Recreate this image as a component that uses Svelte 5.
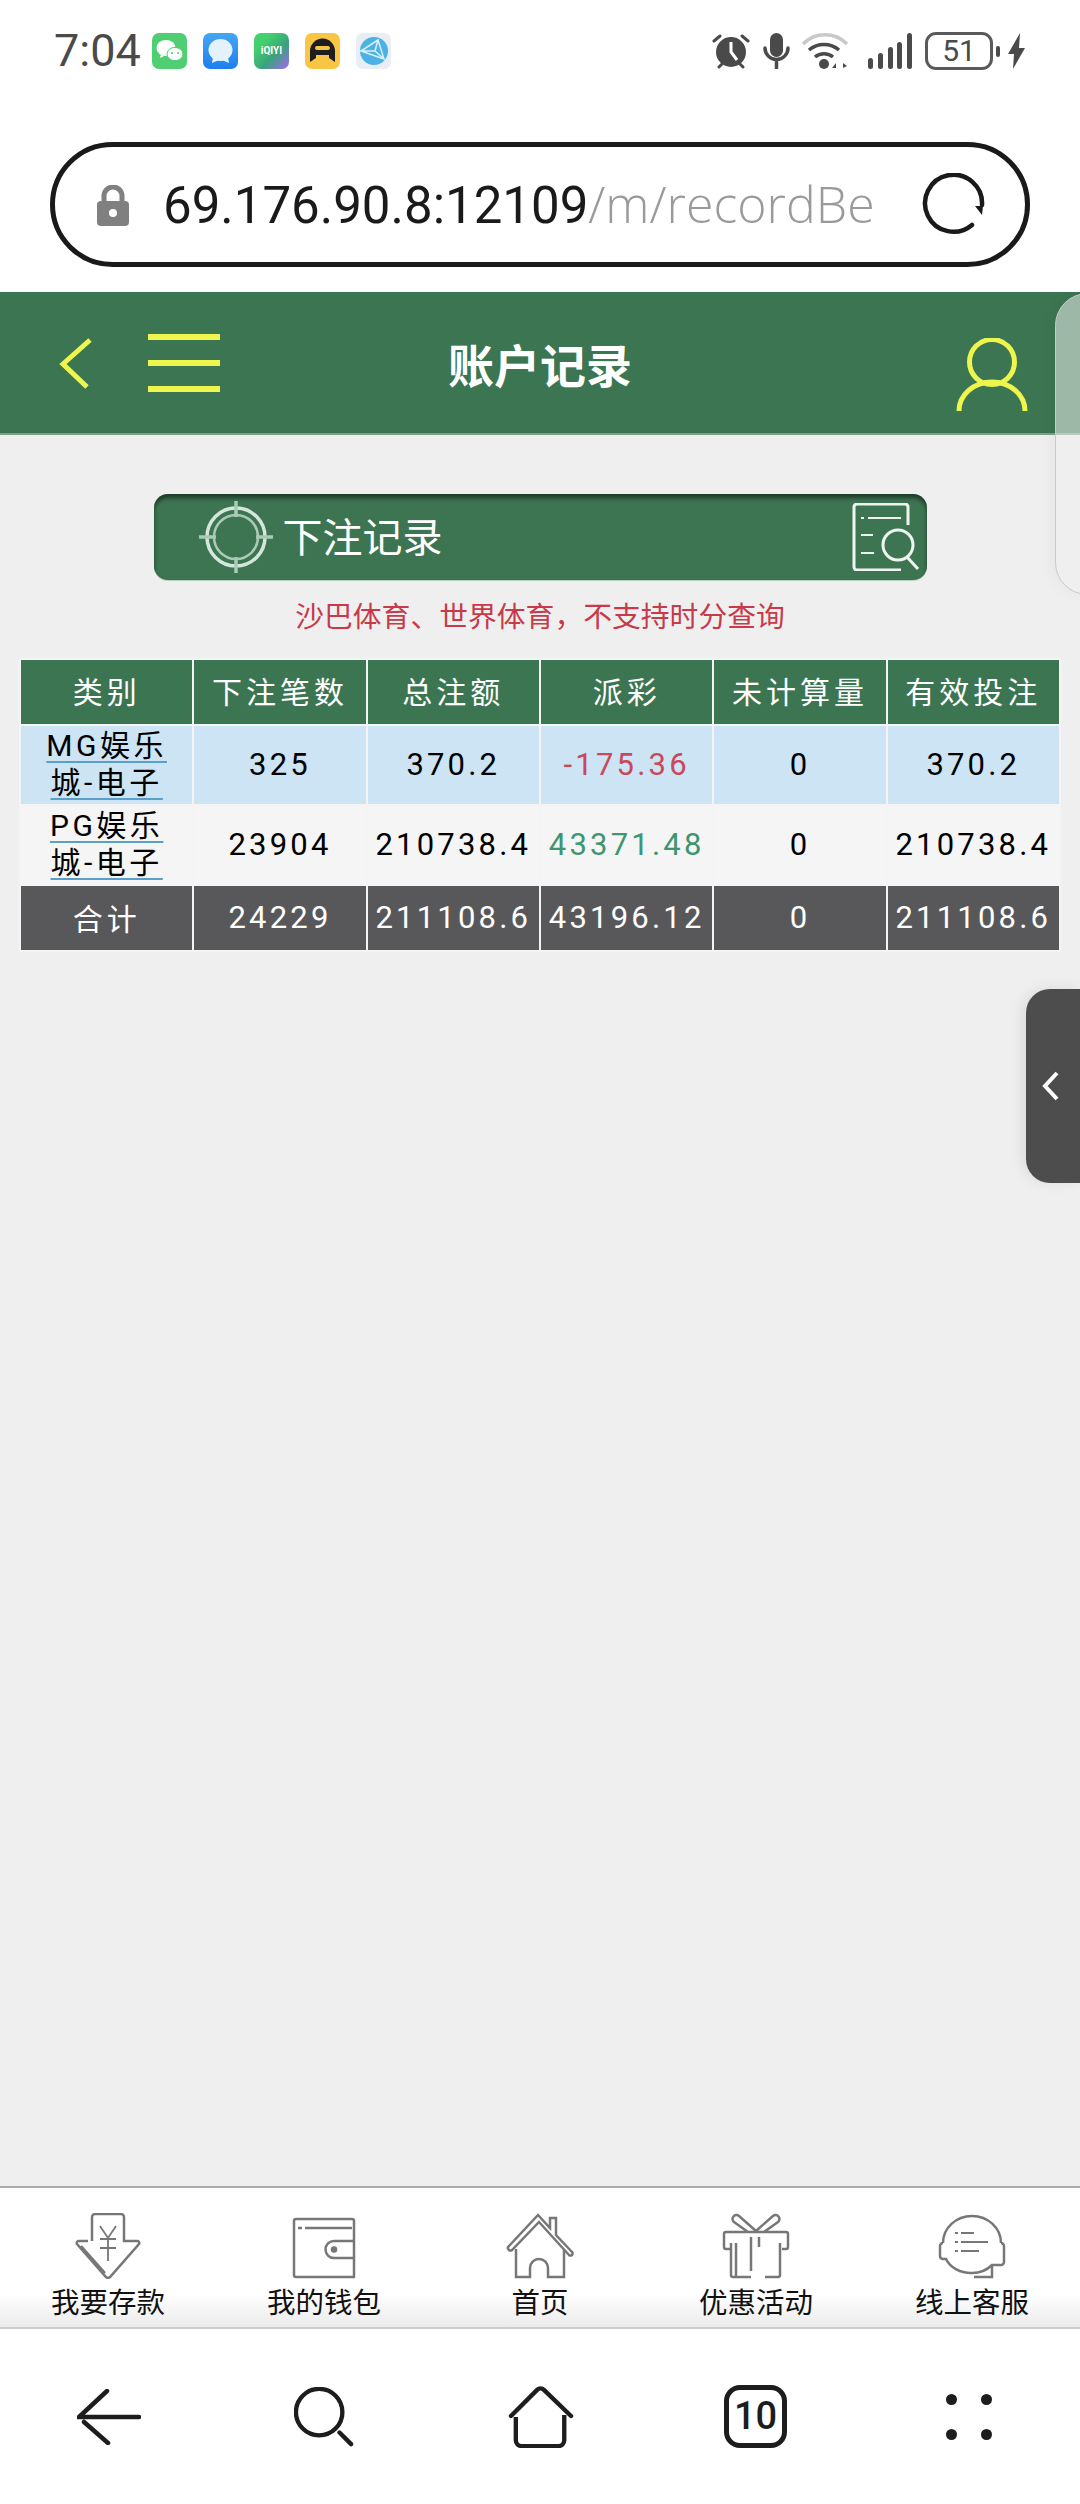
<script lang="ts">
  const columns = ["类别", "下注笔数", "总注额", "派彩", "未计算量", "有效投注"];

  const rows = [
    { name: ["MG娱乐", "城-电子"], count: "325", total: "370.2", payout: "-175.36", tone: "loss", pending: "0", valid: "370.2" },
    { name: ["PG娱乐", "城-电子"], count: "23904", total: "210738.4", payout: "43371.48", tone: "win", pending: "0", valid: "210738.4" }
  ];

  const summary = ["合计", "24229", "211108.6", "43196.12", "0", "211108.6"];

  const tabs = ["我要存款", "我的钱包", "首页", "优惠活动", "线上客服"];
</script>

<div class="phone">
  <div class="status">
    <span class="time">7:04</span>
    <div class="apps">
      <svg class="app" viewBox="0 0 35 36">
        <rect width="35" height="36" rx="7" fill="#4fcf72" />
        <ellipse cx="14" cy="15" rx="9.5" ry="8" fill="#fff" />
        <path d="M9 21l-1 4 5-2.5z" fill="#fff" />
        <ellipse cx="23" cy="21" rx="8" ry="6.6" fill="#fff" stroke="#4fcf72" />
        <circle cx="20" cy="20" r="1" fill="#4fcf72" />
        <circle cx="26" cy="20" r="1" fill="#4fcf72" />
      </svg>
      <svg class="app" viewBox="0 0 35 36">
        <defs>
          <linearGradient id="msg" x1="0" y1="0" x2="0" y2="1">
            <stop offset="0" stop-color="#45a6f5" />
            <stop offset="1" stop-color="#1f7fee" />
          </linearGradient>
        </defs>
        <rect width="35" height="36" rx="7" fill="url(#msg)" />
        <ellipse cx="17.5" cy="17" rx="12" ry="11" fill="#e4f2fd" />
        <path d="M10 24l-1 6 7-3z" fill="#e4f2fd" />
        <path d="M25 24l1 6-7-3z" fill="#e4f2fd" />
      </svg>
      <div class="app iqiyi">iQIYI</div>
      <svg class="app" viewBox="0 0 35 36">
        <rect width="35" height="36" rx="7" fill="#f8c544" />
        <path d="M5 29v-11a12.500 12.500 0 0 1 25 0v11l-6-4v-3h-13v3z" fill="#1e1e1e" />
        <rect x="10" y="13" width="15" height="4" rx="2" fill="#f8c544" />
      </svg>
      <svg class="app" viewBox="0 0 35 36">
        <rect width="35" height="36" rx="7" fill="#e9eef5" />
        <circle cx="18" cy="18" r="14" fill="#4cb1e4" />
        <path d="M5 18l17-11 6 19zM22 7l-3 11 9 8M5 18h14" fill="none" stroke="#d7f0fb" stroke-width="1.500" />
      </svg>
    </div>
    <div class="indicators">
      <svg class="alarm" viewBox="0 0 38 36">
        <circle cx="19" cy="19" r="15" fill="#4a4a4a" />
        <path d="M19 9v10l6 8" fill="none" stroke="#fff" stroke-width="3" />
        <path d="M2 8l6-5M36 8l-6-5M7 34l3-3M31 34l-3-3" stroke="#4a4a4a" stroke-width="3" stroke-linecap="round" />
      </svg>
      <svg class="mic" viewBox="0 0 27 36">
        <rect x="7" y="0" width="13" height="24" rx="6.500" fill="#4a4a4a" />
        <path d="M2 15a11.500 11.500 0 0 0 23 0M13.500 27v9" fill="none" stroke="#4a4a4a" stroke-width="3.500" stroke-linecap="round" />
      </svg>
      <svg class="wifi" viewBox="0 0 46 36">
        <path d="M1 11a31 31 0 0 1 44 0" fill="none" stroke="#c9c9c9" stroke-width="3.500" />
        <path d="M7 17a23 23 0 0 1 30 0M13 24a14 14 0 0 1 18 0" fill="none" stroke="#4a4a4a" stroke-width="3.500" />
        <circle cx="22" cy="31" r="5" fill="#4a4a4a" />
        <path d="M30 35l4-5v5zM38 30v5M41 30l4 3-4 2z" fill="#4a4a4a" />
      </svg>
      <svg class="signal" viewBox="0 0 44 36">
        <rect x="0" y="25" width="5" height="11" rx="2.500" fill="#4a4a4a" />
        <rect x="10" y="20" width="5" height="16" rx="2.500" fill="#4a4a4a" />
        <rect x="20" y="14" width="5" height="22" rx="2.500" fill="#4a4a4a" />
        <rect x="29" y="9" width="5" height="27" rx="2.500" fill="#4a4a4a" />
        <rect x="39" y="0" width="5" height="36" rx="2.500" fill="#4a4a4a" />
      </svg>
      <div class="battery"><span>51</span></div>
      <span class="nub"></span>
      <svg class="bolt" viewBox="0 0 17 36">
        <path d="M12 0L0 21h6L5 36 17 15h-6z" fill="#4a4a4a" />
      </svg>
    </div>
  </div>

  <div class="urlwrap">
    <div class="urlbar">
      <svg class="lock" viewBox="0 0 32 41">
        <path d="M7 20v-9a9 9 0 0 1 18 0v9" fill="none" stroke="#808080" stroke-width="5" />
        <rect x="0" y="16" width="32" height="25" rx="4" fill="#808080" />
        <circle cx="16" cy="28" r="4" fill="#fff" />
      </svg>
      <div class="url"><span class="host">69.176.90.8:12109</span><span class="path">/m/recordBe</span></div>
      <svg class="reload" viewBox="0 0 64 64">
        <path d="M50 52a28.500 28.500 0 1 1 10-20" fill="none" stroke="#1a1a1a" stroke-width="4.500" stroke-linecap="round" />
        <path d="M53 33l8 0-1 9z" fill="#1a1a1a" />
      </svg>
    </div>
  </div>

  <header class="topbar">
    <div class="left">
      <svg class="back" viewBox="0 0 34 52">
        <path d="M31 3L4 27l24 23" fill="none" stroke="#eef64e" stroke-width="5" />
      </svg>
      <div class="burger"><i></i><i></i><i></i></div>
    </div>
    <h1>账户记录</h1>
    <svg class="person" viewBox="0 0 72 74">
      <circle cx="36" cy="24" r="22.500" fill="none" stroke="#eef64e" stroke-width="5" />
      <path d="M3 73a33 29 0 0 1 66 0" fill="none" stroke="#eef64e" stroke-width="5" />
    </svg>
  </header>

  <main>
    <div class="pick">
      <svg class="target" viewBox="0 0 74 72">
        <circle cx="37" cy="36" r="29" fill="none" stroke="#d5e6da" stroke-width="3.500" />
        <circle cx="37" cy="36" r="22" fill="none" stroke="#a9cbb5" stroke-width="2.500" />
        <path d="M37 0v16M37 56v16M0 36h17M57 36h17" stroke="#a9cbb5" stroke-width="3.500" />
      </svg>
      <span>下注记录</span>
      <svg class="doc" viewBox="0 0 68 68">
        <path d="M56 22V4a3 3 0 0 0-3-3H5a3 3 0 0 0-3 3v60a3 3 0 0 0 3 3h44" fill="none" stroke="#eef5f0" stroke-width="3" />
        <path d="M9 15h3M16 15h33M9 32h12M9 50h13" stroke="#eef5f0" stroke-width="2" />
        <circle cx="46" cy="42" r="15" fill="#3d7553" stroke="#eef5f0" stroke-width="3" />
        <path d="M55 54l11 12" stroke="#eef5f0" stroke-width="3" />
      </svg>
    </div>
    <p class="note">沙巴体育、世界体育，不支持时分查询</p>

    <table>
      <thead>
        <tr>
          {#each columns as col}
            <th>{col}</th>
          {/each}
        </tr>
      </thead>
      <tbody>
        {#each rows as row, i}
          <tr class={i === 0 ? "odd" : "even"}>
            <td class="cat">
              <a href="#top">{row.name[0]}</a><br /><a href="#top">{row.name[1]}</a>
            </td>
            <td>{row.count}</td>
            <td>{row.total}</td>
            <td class={row.tone}>{row.payout}</td>
            <td>{row.pending}</td>
            <td>{row.valid}</td>
          </tr>
        {/each}
        <tr class="sum">
          {#each summary as cell, i}
            <td class:label={i === 0}>{cell}</td>
          {/each}
        </tr>
      </tbody>
    </table>
  </main>

  <nav class="tabs">
    {#each tabs as tab, i}
      <div class="tab">
        <svg viewBox="0 0 68 66">
          {#if i === 0}
            <path d="M18 28V4a3 3 0 0 1 3-3h26a3 3 0 0 1 3 3v24h13a2 2 0 0 1 2 3L36 64a3 3 0 0 1-4 0L3 31a2 2 0 0 1 2-3h9" />
            <path d="M7 33l24 27" />
            <path d="M26 13l8 12 8-12M34 25v23M26 26h16M26 35h16" stroke-width="1.800" />
          {:else if i === 1}
            <path d="M4 9a2 2 0 0 1 2-2h56a2 2 0 0 1 2 2v56a1 1 0 0 1-1 0H6a2 2 0 0 1-2-2z" transform="translate(0 -1)" />
            <path d="M8 15h4M15 15h47" />
            <path d="M64 28H44a8.500 8.500 0 0 0 0 17h20" />
            <circle cx="44" cy="36.500" r="2" fill="#777" />
          {:else if i === 2}
            <path d="M3 33L32 2l12 13V5h6v17l16 17a1 1 0 0 1-3 3L33 9 6 37a1 1 0 0 1-3-4z" />
            <path d="M10 36v28h14v-9a9 9 0 0 1 18 0v9h16V36" />
          {:else if i === 3}
            <path d="M26 19L12 9a3 3 0 0 1 5-6l17 15 17-15a3 3 0 0 1 5 6L42 19" />
            <path d="M8 36H4a2 2 0 0 1-2-2v-13a2 2 0 0 1 2-2h60a2 2 0 0 1 2 2v13a2 2 0 0 1-2 2h-4" />
            <path d="M9 30v32a2 2 0 0 0 2 2h18M14 30v33M43 64h13a2 2 0 0 0 2-2V30" />
            <path d="M29 24v34M37 24v10" />
          {:else}
            <path d="M5 30a29 27 0 0 1 58 0" />
            <path d="M5 30a3 3 0 0 0-3 3v10a3 3 0 0 0 3 3h3a27 22 0 0 0 26 14c8 0 14-2 20-8h9a3 3 0 0 0 3-3V33a3 3 0 0 0-3-3" />
            <path d="M36 64h18v-12" />
            <path d="M17 20h3M23 20h13M17 29h3M23 29h27M17 38h3M23 38h18" stroke-width="2" />
          {/if}
        </svg>
        <span>{tab}</span>
      </div>
    {/each}
  </nav>

  <footer class="browser">
    <svg class="b-back" viewBox="0 0 64 56">
      <path d="M62 28H2L30 2M7 33l24 21" fill="none" stroke="#1d1d1d" stroke-width="4.500" stroke-linecap="round" />
    </svg>
    <svg class="b-search" viewBox="0 0 62 62">
      <circle cx="26" cy="26" r="24" fill="none" stroke="#1d1d1d" stroke-width="4.500" />
      <path d="M47 47l12 12" stroke="#1d1d1d" stroke-width="4.500" stroke-linecap="round" />
    </svg>
    <svg class="b-home" viewBox="0 0 68 64">
      <path d="M3 31L30 4a5 5 0 0 1 7 0l28 27" fill="none" stroke="#1d1d1d" stroke-width="4.500" stroke-linecap="round" />
      <path d="M8 32v24a6 6 0 0 0 6 6h38a6 6 0 0 0 6-6V30" fill="none" stroke="#1d1d1d" stroke-width="4.500" />
    </svg>
    <div class="b-count">10</div>
    <div class="b-dots"><i></i><i></i><i></i><i></i></div>
  </footer>

  <div class="side-sheet"></div>
  <div class="drawer">
    <svg viewBox="0 0 18 30">
      <path d="M15 2L3 15l12 13" fill="none" stroke="#fff" stroke-width="4" />
    </svg>
  </div>
</div>

<style>
  :global(body) {
    margin: 0;
    background: #fff;
  }

  .phone {
    position: relative;
    display: flex;
    flex-direction: column;
    width: 1080px;
    height: 2504px;
    overflow: hidden;
    background: #fff;
    font-family: Roboto, "Noto Sans CJK SC", sans-serif;
  }

  /* status bar */
  .status {
    display: flex;
    align-items: flex-start;
    height: 142px;
    box-sizing: border-box;
    padding: 33px 55px 0 54px;
    flex-shrink: 0;
  }
  .time {
    width: 98px;
    font-size: 45px;
    line-height: 36px;
    color: #4a4a4a;
  }
  .apps {
    display: flex;
    gap: 16px;
  }
  .app {
    display: block;
    width: 35px;
    height: 36px;
  }
  .iqiyi {
    border-radius: 7px;
    background: linear-gradient(135deg, #43d06f 25%, #3aa27c 60%, #a468f5);
    color: #fff;
    font-size: 10px;
    font-weight: 700;
    line-height: 36px;
    text-align: center;
  }
  .indicators {
    display: flex;
    align-items: flex-start;
    margin-left: auto;
  }
  .alarm {
    width: 38px;
    height: 36px;
  }
  .mic {
    width: 27px;
    height: 36px;
    margin-left: 13px;
  }
  .wifi {
    width: 46px;
    height: 36px;
    margin-left: 12px;
  }
  .signal {
    width: 44px;
    height: 36px;
    margin-left: 20px;
  }
  .battery {
    width: 68px;
    height: 38px;
    box-sizing: border-box;
    margin: -1px 0 0 13px;
    border: 3px solid #5a5a5a;
    border-radius: 11px;
    color: #4a4a4a;
    font-size: 30px;
    line-height: 32px;
    text-align: center;
  }
  .nub {
    width: 4px;
    height: 11px;
    margin: 13px 0 0 3px;
    border-radius: 2px;
    background: #4a4a4a;
  }
  .bolt {
    width: 17px;
    height: 36px;
    margin-left: 8px;
  }

  /* address bar */
  .urlwrap {
    height: 150px;
    flex-shrink: 0;
    box-sizing: border-box;
    padding: 0 50px 0 50px;
  }
  .urlbar {
    display: flex;
    align-items: center;
    height: 125px;
    box-sizing: border-box;
    padding: 0 39px 0 42px;
    border: 5px solid #1a1a1a;
    border-radius: 63px;
  }
  .lock {
    width: 32px;
    height: 41px;
    flex-shrink: 0;
    margin-top: 2px;
  }
  .url {
    margin-left: 34px;
    white-space: nowrap;
    font-size: 51px;
    line-height: 60px;
  }
  .host {
    color: #1a1a1a;
  }
  .path {
    color: #9a9a9a;
    font-family: "Open Sans", sans-serif;
    font-size: 50px;
    font-weight: 300;
  }
  .reload {
    width: 64px;
    height: 64px;
    margin-left: auto;
    flex-shrink: 0;
  }

  /* page header */
  .topbar {
    display: grid;
    grid-template-columns: 1fr auto 1fr;
    align-items: center;
    height: 143px;
    flex-shrink: 0;
    box-sizing: border-box;
    padding: 0 52px;
    background: #3c7552;
    border-bottom: 2px solid #7d9e89;
  }
  .left {
    display: flex;
    align-items: center;
    gap: 55px;
    margin-left: 7px;
  }
  .back {
    width: 34px;
    height: 52px;
  }
  .burger {
    display: flex;
    flex-direction: column;
    gap: 20px;
    width: 72px;
  }
  .burger i {
    display: block;
    height: 6px;
    background: #eef64e;
  }
  h1 {
    margin: 0;
    color: #fff;
    font-size: 46px;
    font-weight: 700;
    white-space: nowrap;
  }
  .person {
    justify-self: end;
    width: 72px;
    height: 74px;
    margin-top: 24px;
  }

  /* content */
  main {
    flex: 1;
    display: flex;
    flex-direction: column;
    align-items: center;
    background: #efefef;
    padding-top: 59px;
  }
  .pick {
    display: flex;
    align-items: center;
    width: 773px;
    height: 86px;
    box-sizing: border-box;
    padding: 0 7px 0 45px;
    border-radius: 14px;
    background: #3d7553;
    box-shadow: inset 0 4px 4px rgba(0, 0, 0, 0.5), 0 1px 0 #b9d0c1;
    color: #fff;
    font-size: 40px;
  }
  .target {
    width: 74px;
    height: 72px;
  }
  .pick span {
    margin: 0 0 5px 10px;
  }
  .doc {
    width: 68px;
    height: 68px;
    margin-left: auto;
  }
  .note {
    margin: 14px 0 0;
    color: #c8394a;
    font-size: 28.800px;
    line-height: 46px;
  }
  table {
    width: 1042px;
    margin-top: 18px;
    table-layout: fixed;
    border-collapse: collapse;
    color: #000;
    font-size: 31px;
    letter-spacing: 3.200px;
    text-align: center;
  }
  th,
  td {
    padding: 0 0 2px;
    border: 2px solid #f4f4f4;
  }
  th {
    height: 59px;
    padding-bottom: 5px;
    background: #3c7552;
    color: #fff;
    font-size: 30px;
    font-weight: 400;
    letter-spacing: 4px;
  }
  .odd td {
    height: 76px;
    background: #cce4f3;
  }
  .even td {
    height: 76px;
    background: #f5f5f5;
  }
  .cat {
    font-size: 30px;
    line-height: 37px;
    letter-spacing: 3.500px;
  }
  .cat a {
    color: #000;
    text-decoration: underline;
    text-decoration-color: #5a9fc8;
    text-decoration-thickness: 2px;
    text-underline-offset: 5px;
  }
  .loss {
    color: #c9485c;
  }
  .win {
    color: #3f9472;
  }
  .sum td {
    height: 62px;
    background: #58585a;
    color: #fff;
  }
  .sum .label {
    font-size: 30px;
    letter-spacing: 4px;
  }

  /* bottom tabs */
  .tabs {
    display: flex;
    height: 143px;
    flex-shrink: 0;
    box-sizing: border-box;
    border-top: 2px solid #aaa;
    border-bottom: 2px solid #ccc;
    background: linear-gradient(#fff 76%, #ebebeb);
  }
  .tab {
    flex: 1;
    display: flex;
    flex-direction: column;
    align-items: center;
    padding-top: 25px;
  }
  .tab svg {
    width: 68px;
    height: 66px;
    fill: none;
    stroke: #777;
    stroke-width: 2.500;
  }
  .tab span {
    margin-top: 7px;
    color: #111;
    font-size: 28.500px;
    line-height: 36px;
    white-space: nowrap;
  }

  /* browser toolbar */
  .browser {
    display: flex;
    height: 175px;
    flex-shrink: 0;
    align-items: center;
    box-sizing: border-box;
    padding-left: 77px;
  }
  .b-back {
    width: 64px;
    height: 56px;
  }
  .b-search {
    width: 60px;
    height: 60px;
    margin-left: 153px;
  }
  .b-home {
    width: 66px;
    height: 62px;
    margin-left: 154px;
  }
  .b-count {
    width: 63px;
    height: 63px;
    margin-left: 150px;
    box-sizing: border-box;
    border: 5px solid #1d1d1d;
    border-radius: 16px;
    color: #1d1d1d;
    font-size: 38px;
    font-weight: 500;
    line-height: 53px;
    text-align: center;
  }
  .b-dots {
    display: grid;
    grid-template-columns: 11px 11px;
    gap: 24px;
    margin-left: 159px;
  }
  .b-dots i {
    display: block;
    width: 11px;
    height: 11px;
    border-radius: 50%;
    background: #1d1d1d;
  }

  /* overlays on the right edge */
  .side-sheet {
    position: absolute;
    top: 293px;
    right: -40px;
    width: 63px;
    height: 300px;
    border: 1px solid #c9c9c9;
    border-radius: 40px;
    background: rgba(238, 238, 238, 0.55);
    box-shadow: -6px 0 14px rgba(0, 0, 0, 0.03);
  }
  .drawer {
    position: absolute;
    top: 989px;
    left: 1026px;
    display: flex;
    align-items: center;
    width: 54px;
    height: 194px;
    padding-left: 16px;
    box-sizing: border-box;
    border-radius: 24px 0 0 24px;
    background: #4d4d4d;
    box-shadow: -4px 0 14px rgba(0, 0, 0, 0.08);
  }
  .drawer svg {
    width: 18px;
    height: 30px;
  }
</style>
